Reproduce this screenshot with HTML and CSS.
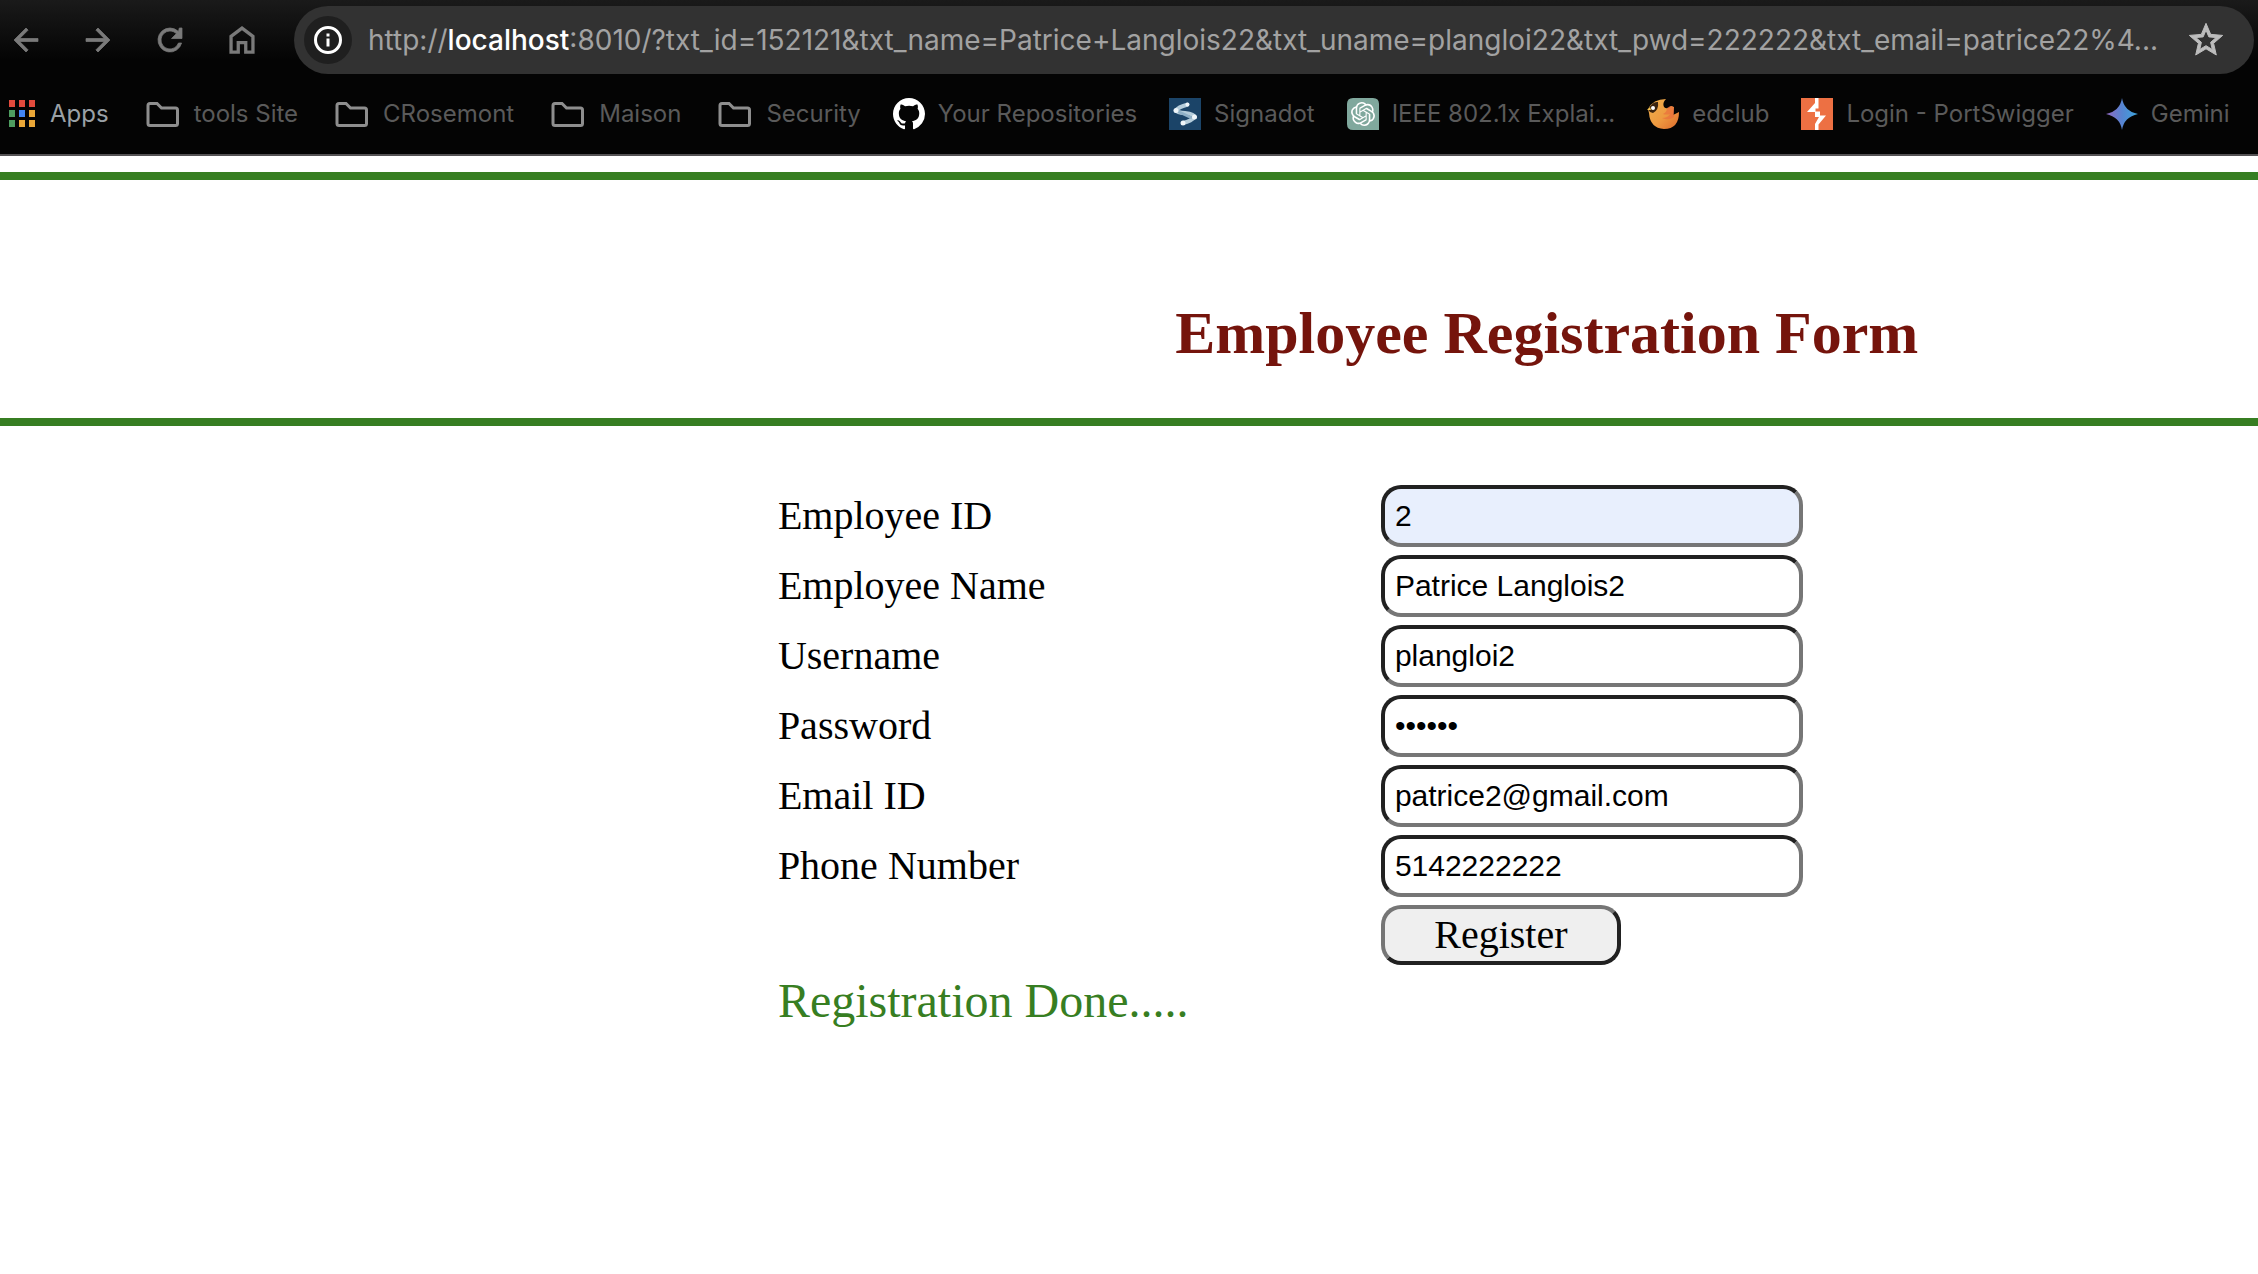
FILE: index.html
```html
<!DOCTYPE html>
<html lang="en">
<head>
<meta charset="utf-8">
<title>Employee Registration Form</title>
<link rel="stylesheet" href="styles.css">
</head>
<body>
<header class="browser">
  <div class="toolbar">
    <nav class="nav" aria-label="Navigation">
      <button class="nav-btn" type="button" aria-label="Back"><svg viewBox="0 0 24 24"><path d="M20 11H7.830l5.590-5.590L12 4l-8 8 8 8 1.410-1.410L7.830 13H20v-2z" stroke="#7a7a7a" stroke-width=".5"/></svg></button>
      <button class="nav-btn" type="button" aria-label="Forward"><svg viewBox="0 0 24 24"><path d="M12 4l-1.410 1.410L16.170 11H4v2h12.170l-5.580 5.590L12 20l8-8z" stroke="#7a7a7a" stroke-width=".5"/></svg></button>
      <button class="nav-btn" type="button" aria-label="Reload"><svg viewBox="0 0 24 24"><path d="M17.650 6.350A7.960 7.960 0 0 0 12 4a8 8 0 1 0 7.730 10h-2.080A6 6 0 1 1 12 6c1.660 0 3.140.69 4.220 1.780L13 11h7V4h-1.800z" stroke="#7a7a7a" stroke-width=".5"/></svg></button>
      <button class="nav-btn" type="button" aria-label="Home"><svg viewBox="0 0 24 24"><path d="M4.700 20.100V9.600L12 4.100l7.300 5.500v10.500h-4.800v-6.300h-5v6.300z" fill="none" stroke="#7a7a7a" stroke-width="2.200"/></svg></button>
    </nav>
    <div class="omnibox">
      <button class="info-btn" type="button" aria-label="Site information"><svg viewBox="0 0 28 28"><circle cx="14" cy="14" r="12.500" fill="none" stroke="#fff" stroke-width="3"/><path d="M12.500 12.500h3v8h-3zM12.500 7.500h3v3h-3z" fill="#fff"/></svg></button>
      <div class="url" role="textbox" aria-label="Address" tabindex="0">http://<span class="host">localhost</span>:8010/?txt_id=152121&amp;txt_name=Patrice+Langlois22&amp;txt_uname=plangloi22&amp;txt_pwd=222222&amp;txt_email=patrice22%4...</div>
      <button class="star-btn" type="button" aria-label="Bookmark this tab"><svg viewBox="0 0 24 24"><path d="M22 9.240l-7.190-.62L12 2 9.190 8.630 2 9.240l5.460 4.730L5.820 21 12 17.270 18.180 21l-1.630-7.030L22 9.240zM12 15.400l-3.760 2.270 1-4.280-3.320-2.880 4.380-.38L12 6.100l1.710 4.040 4.380.38-3.320 2.880 1 4.280L12 15.400z" stroke="#bdbdbd" stroke-width=".6"/></svg></button>
    </div>
  </div>
  <nav class="bookmarks" aria-label="Bookmarks">
    <a class="mark apps" href="#"><svg class="ico" viewBox="0 0 32 32"><g fill="#e34b3d"><path d="M1 2h6v7H1zM11 2h6v7h-6zM21 2h6v7h-6z"/></g><g fill="#4e9d60"><path d="M1 12h6v7H1zM1 22h6v7H1z"/></g><path d="M11 12h6v7h-6z" fill="#4286f5"/><path d="M21 12h6v7h-6zM11 22h6v7h-6zM21 22h6v7h-6z" fill="#eaa738"/></svg>Apps</a>
    <a class="mark folder" href="#"><svg class="ico" viewBox="0 0 36 32"><path d="M5 5.500h7l4.500 4.500h14q2 0 2 2v13.500q0 2-2 2H5q-2 0-2-2v-18q0-2 2-2z" fill="none" stroke="#8e8e8e" stroke-width="3"/></svg>tools Site</a>
    <a class="mark folder" href="#"><svg class="ico" viewBox="0 0 36 32"><path d="M5 5.500h7l4.500 4.500h14q2 0 2 2v13.500q0 2-2 2H5q-2 0-2-2v-18q0-2 2-2z" fill="none" stroke="#8e8e8e" stroke-width="3"/></svg>CRosemont</a>
    <a class="mark folder" href="#"><svg class="ico" viewBox="0 0 36 32"><path d="M5 5.500h7l4.500 4.500h14q2 0 2 2v13.500q0 2-2 2H5q-2 0-2-2v-18q0-2 2-2z" fill="none" stroke="#8e8e8e" stroke-width="3"/></svg>Maison</a>
    <a class="mark folder" href="#"><svg class="ico" viewBox="0 0 36 32"><path d="M5 5.500h7l4.500 4.500h14q2 0 2 2v13.500q0 2-2 2H5q-2 0-2-2v-18q0-2 2-2z" fill="none" stroke="#8e8e8e" stroke-width="3"/></svg>Security</a>
    <a class="mark" href="#"><svg class="ico" viewBox="0 0 16 16"><path fill="#fff" d="M8 0C3.580 0 0 3.580 0 8c0 3.540 2.290 6.530 5.470 7.590.4.070.55-.17.55-.38 0-.19-.01-.82-.01-1.490-2.010.37-2.530-.49-2.690-.94-.09-.23-.48-.94-.82-1.130-.28-.15-.68-.52-.01-.53.63-.01 1.080.58 1.230.82.72 1.210 1.870.87 2.330.66.07-.52.28-.87.51-1.070-1.780-.2-3.640-.89-3.640-3.950 0-.87.31-1.590.82-2.150-.08-.2-.36-1.020.08-2.120 0 0 .67-.21 2.200.82.64-.18 1.320-.27 2-.27s1.360.09 2 .27c1.530-1.040 2.200-.82 2.200-.82.44 1.100.16 1.920.08 2.120.51.56.82 1.270.82 2.150 0 3.070-1.870 3.750-3.650 3.950.29.25.54.73.54 1.480 0 1.070-.01 1.930-.01 2.200 0 .21.15.46.55.38A8.010 8.010 0 0 0 16 8c0-4.420-3.580-8-8-8z"/></svg>Your Repositories</a>
    <a class="mark" href="#"><svg class="ico" viewBox="0 0 32 32"><path d="M0 0h32v32H0z" fill="#1b4468"/><path d="M19 6.500Q9 9 7 12.500q1 2 9 2.500 9 1 9.500 4-3 4-11.500 6" fill="none" stroke="#b4ccda" stroke-width="4"/><path d="M8 13l15 7" stroke="#8fb0c6" stroke-width="3"/><g fill="#eef5f9"><circle cx="18.500" cy="6.500" r="2"/><circle cx="7" cy="12.500" r="2.500"/><circle cx="25.500" cy="19" r="2.500"/><circle cx="14" cy="25" r="2.500"/></g></svg>Signadot</a>
    <a class="mark" href="#"><svg class="ico" viewBox="0 0 32 32"><path d="M6 0h20q6 0 6 6v26H6q-6 0-6-6V6q0-6 6-6z" fill="#80a89d"/><g transform="translate(4 4)"><path fill="#fff" d="M22.282 9.821a5.985 5.985 0 0 0-.516-4.910 6.046 6.046 0 0 0-6.510-2.900A6.065 6.065 0 0 0 4.981 4.182a5.985 5.985 0 0 0-3.998 2.900 6.046 6.046 0 0 0 .743 7.097 5.980 5.980 0 0 0 .511 4.911 6.051 6.051 0 0 0 6.515 2.900A5.985 5.985 0 0 0 13.260 24a6.056 6.056 0 0 0 5.772-4.206 5.990 5.990 0 0 0 3.998-2.900 6.056 6.056 0 0 0-.748-7.073zm-9.022 12.608a4.476 4.476 0 0 1-2.876-1.041l.142-.08 4.778-2.758a.795.795 0 0 0 .393-.681v-6.737l2.020 1.169a.071.071 0 0 1 .038.052v5.583a4.504 4.504 0 0 1-4.495 4.493zM3.600 18.304a4.471 4.471 0 0 1-.535-3.014l.142.085 4.783 2.759a.771.771 0 0 0 .781 0l5.843-3.369v2.332a.080.080 0 0 1-.033.062L9.740 19.950a4.499 4.499 0 0 1-6.140-1.646zM2.341 7.896a4.485 4.485 0 0 1 2.366-1.973V11.600a.766.766 0 0 0 .388.677l5.814 3.354-2.020 1.169a.076.076 0 0 1-.071 0l-4.830-2.787A4.504 4.504 0 0 1 2.341 7.872zm16.596 3.856l-5.833-3.387L15.119 7.200a.076.076 0 0 1 .071 0l4.830 2.792a4.494 4.494 0 0 1-.676 8.104v-5.677a.790.790 0 0 0-.407-.667zm2.011-3.023l-.142-.085-4.774-2.782a.776.776 0 0 0-.785 0L9.409 9.230V6.897a.066.066 0 0 1 .028-.061l4.830-2.787a4.499 4.499 0 0 1 6.680 4.660zM8.307 12.863l-2.020-1.164a.080.080 0 0 1-.038-.057V6.074a4.499 4.499 0 0 1 7.376-3.453l-.142.080-4.778 2.758a.795.795 0 0 0-.393.681zm1.097-2.365l2.602-1.500 2.607 1.500v2.999l-2.597 1.500-2.607-1.500z"/></g></svg>IEEE 802.1x Explai...</a>
    <a class="mark" href="#"><svg class="ico" viewBox="0 0 32 32"><defs><linearGradient id="bird" x2="1" y2="1"><stop stop-color="#efb04c"/><stop offset=".55" stop-color="#ee9a40"/><stop offset="1" stop-color="#de6a2c"/></linearGradient></defs><path d="M1 11Q6 1 19 1q-4 4-2 8 3 3 7-1l3 1-1 8 6-3q0 17-15 17Q3 30 2 15z" fill="url(#bird)"/><path d="M20 10q5-4 7 0v9q-5 4-12 1 6 0 8-4-4 1-7 0 4-2 4-6z" fill="#ea6f3d" opacity=".7"/><path d="M1 11Q6 3 11 4q1 8-5 11l-3-1z" fill="#3a230f"/><circle cx="6" cy="10" r="2" fill="#fff"/><path d="M0 12l3-3 1 3z" fill="#f0c050"/></svg>edclub</a>
    <a class="mark" href="#"><svg class="ico" viewBox="0 0 32 32"><path d="M0 0h32v32H0z" fill="#ed7043"/><path d="M14 0h3.500v10.500H14.500v3H19v4H25l-7.500 9v5.500H14v-6l4-7h-4v-5H6l8-9z" fill="#fff"/></svg>Login - PortSwigger</a>
    <a class="mark" href="#"><svg class="ico" viewBox="0 0 32 32"><defs><linearGradient id="gem"><stop stop-color="#9168c0"/><stop offset=".5" stop-color="#5684d1"/><stop offset="1" stop-color="#3ba6dd"/></linearGradient></defs><path d="M16 0q2 13 16 16-14 3-16 16Q14 19 0 16 14 13 16 0z" fill="url(#gem)"/></svg>Gemini</a>
  </nav>
</header>
<main class="page">
  <hr class="rule">
  <h1 class="title">Employee Registration Form</h1>
  <hr class="rule">
  <form class="form">
    <label for="emp-id">Employee ID</label><input class="field filled" id="emp-id" type="text" value="2">
    <label for="emp-name">Employee Name</label><input class="field" id="emp-name" type="text" value="Patrice Langlois2">
    <label for="uname">Username</label><input class="field" id="uname" type="text" value="plangloi2">
    <label for="pwd">Password</label><input class="field" id="pwd" type="password" value="222222">
    <label for="email">Email ID</label><input class="field" id="email" type="email" value="patrice2@gmail.com">
    <label for="phone">Phone Number</label><input class="field" id="phone" type="tel" value="5142222222">
    <button class="register" type="button">Register</button>
    <output class="status">Registration Done.....</output>
  </form>
</main>
</body>
</html>
```
FILE: styles.css
```css
* { box-sizing: border-box; }
body { margin: 0; background: #fff; color: #000; font-family: "Liberation Serif", "Times New Roman", serif; }
button { border: 0; padding: 0; background: none; }
svg { display: block; }

.browser {
  background: linear-gradient(#1a1a1a, #040404 60px);
  border-bottom: 2px solid #545254;
  font-family: Inter, sans-serif;
}
.toolbar { display: flex; align-items: center; gap: 34px; padding: 6px 4px 0 8px; }
.nav { display: flex; gap: 36px; }
.nav-btn, .nav-btn svg { width: 36px; height: 36px; fill: #7a7a7a; }
.omnibox {
  flex: 1; min-width: 0; height: 68px; padding: 0 28px 0 10px;
  display: flex; align-items: center; gap: 16px;
  background: #323232; border-radius: 34px;
}
.info-btn { flex: none; width: 48px; height: 48px; border-radius: 50%; background: #1f1f1f; display: grid; place-items: center; }
.info-btn svg { width: 28px; height: 28px; }
.url { flex: 1; min-width: 0; white-space: nowrap; font-size: 28px; line-height: 36px; color: #a2a2a2; }
.host { color: #fff; font-weight: 500; }
.star-btn, .star-btn svg { flex: none; width: 40px; height: 40px; fill: #bdbdbd; }

.bookmarks { display: flex; height: 80px; align-items: center; gap: 32px; padding: 0 8px; overflow: hidden; }
.mark { display: flex; align-items: center; gap: 13px; font-size: 24px; line-height: 32px; white-space: nowrap; color: #5a5a5a; text-decoration: none; }
.apps { gap: 10px; color: #9aa0a6; }
.folder { gap: 13px; padding-left: 4px; }
.ico { flex: none; width: 32px; height: 32px; }
.folder .ico { width: 36px; }

.page { padding-top: 16px; }
.rule { height: 8px; margin: 0; border: 0; background: #377e22; }
.title { margin: 0; padding: 118px 0 50px 37%; text-align: center; font-size: 60px; line-height: 70px; color: #75140c; }
.form {
  display: grid; grid-template-columns: 603px 422px; row-gap: 8px; align-items: center;
  padding: 59px 0 40px 34.45%; font-size: 40px; line-height: 46px;
}
.field {
  width: 100%; height: 62px; padding: 2px 10px; border: 4px solid; border-color: #212121 #767676 #767676 #212121;
  border-radius: 20px; background: #fff; color: #000; font-family: "Liberation Sans", Arial, sans-serif; font-size: 30px;
}
.filled { background: #e8effd; }
.register {
  grid-column: 2; width: 240px; height: 60px; border: 4px solid; border-color: #767676 #212121 #212121 #767676;
  border-radius: 20px; background: #efefef; color: #000; font: 40px/46px "Liberation Serif", "Times New Roman", serif;
}
.status { grid-column: 1 / -1; font-size: 48px; line-height: 56px; color: #377e22; }
```
